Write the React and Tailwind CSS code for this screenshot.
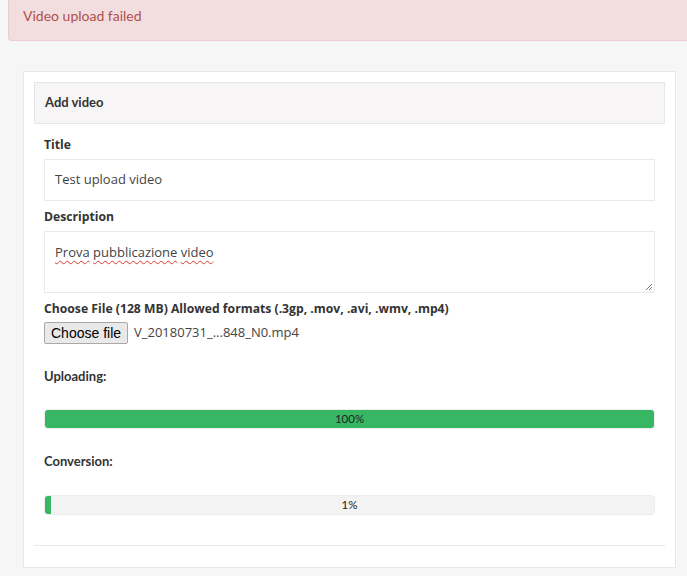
const narrow = "font-['Lato','Roboto',sans-serif]"
const open = "font-['Open_Sans','Noto_Sans',sans-serif]"

function Label({ children }) {
  return <div className={`${open} text-[12.2px] font-bold leading-[16px] text-[#333]`}>{children}</div>
}

function Progress({ value, label }) {
  return (
    <div className="relative h-[20px] rounded-[4px] bg-[#f3f3f3] border border-[#ececec] overflow-hidden">
      <div className="absolute inset-y-0 left-0 bg-[#37b763]" style={{ width: `${Math.max(value, 1)}%`, minWidth: '6px' }} />
      <div className={`relative ${narrow} text-center text-[11.5px] leading-[18px] text-[#222]`}>{label}</div>
    </div>
  )
}

function Wavy({ children }) {
  return (
    <span className="underline decoration-wavy decoration-[#e0392b] decoration-1 underline-offset-[3px]">{children}</span>
  )
}

export default function App() {
  return (
    <div className="min-h-[576px] bg-[#f6f6f6] pb-[9px]">
      <div className="ml-[8px] h-[41px] bg-[#f2dede] border-b border-l border-[#ebccd1] rounded-bl-[4px] flex items-center">
        <span className={`${narrow} pl-[14px] text-[14px] text-[#b0504e] -mt-[10px]`}>Video upload failed</span>
      </div>

      <div className="ml-[23px] mt-[30px] w-[653px] bg-white border border-[#e8e8e8] p-[10px]">
        <div className="h-[42px] bg-[#f7f5f5] border border-[#e6e6e6] flex items-center px-[10px]">
          <span className={`${narrow} text-[13px] font-bold text-[#333]`}>Add video</span>
        </div>

        <div className="px-[10px] pt-[13px]">
          <Label>Title</Label>
          <div className={`mt-[6px] h-[42px] border border-[#e9e9e9] flex items-center px-[10px] ${open} text-[13px] text-[#444]`}>
            Test upload video
          </div>

          <div className="mt-[8px]">
            <Label>Description</Label>
          </div>
          <div className={`relative mt-[6px] h-[62px] border border-[#e9e9e9] px-[10px] pt-[11px] ${open} text-[13px] text-[#444]`}>
            <Wavy>Prova</Wavy> <Wavy>pubblicazione</Wavy> <Wavy>video</Wavy>
            <svg className="absolute right-[1px] bottom-[1px]" width="9" height="9" viewBox="0 0 9 9">
              <path d="M8 2 L2 8 M8 5 L5 8" stroke="#777" strokeWidth="1" />
            </svg>
          </div>

          <div className="mt-[8px]">
            <Label>Choose File (128 MB) Allowed formats (.3gp, .mov, .avi, .wmv, .mp4)</Label>
          </div>
          <div className="mt-[5px] flex items-center gap-[6px]">
            <button className="h-[22px] px-[6px] bg-[#e9e9e9] border border-[#a9a9a9] rounded-[2px] font-['Liberation_Sans',Arial,sans-serif] text-[14px] text-black leading-none">
              Choose file
            </button>
            <span className={`${open} text-[13px] text-[#444]`}>V_20180731_...848_N0.mp4</span>
          </div>

          <div className={`mt-[24px] ${narrow} text-[13px] font-bold text-[#333] leading-[16px]`}>Uploading:</div>
          <div className="mt-[25px]">
            <Progress value={100} label="100%" />
          </div>

          <div className={`mt-[24px] ${narrow} text-[13px] font-bold text-[#333] leading-[16px]`}>Conversion:</div>
          <div className="mt-[26px]">
            <Progress value={0} label="1%" />
          </div>
        </div>

        <div className="mt-[30px] border-t border-[#e8e8e8]" />
        <div className="h-[11px]" />
      </div>
    </div>
  )
}
